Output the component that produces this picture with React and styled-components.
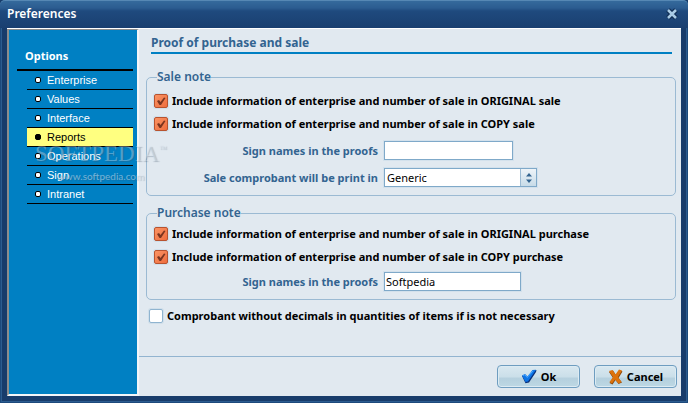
import React from "react";
import styled, { createGlobalStyle } from "styled-components";

const GlobalStyle = createGlobalStyle`
  * {
    box-sizing: border-box;
  }

  body {
    margin: 0;
    background: #183c6b;
    font-family: "Noto Sans", "Open Sans", sans-serif;
    font-size: 11px;
    line-height: 14px;
  }
`;

const Window = styled.div`
  display: flex;
  flex-direction: column;
  min-height: 100vh;
  padding: 0 7px 7px;
  background: #183c6b;
  border-radius: 5px 5px 0 0;
  box-shadow: inset 0 0 0 1px #1d4a7c, inset 0 0 0 2px #2c5c8f;
`;

const TitleBar = styled.header`
  display: flex;
  align-items: center;
  justify-content: space-between;
  height: 28px;
  margin: 0 -7px;
  padding: 0 9px 2px 7px;
  border-top: 1px solid #5688b4;
  border-radius: 5px 5px 0 0;
  background: linear-gradient(#356a9c 0, #2b5c90 7px, #1f4a7e 10px, #1a3f70 100%);
`;

const Title = styled.h1`
  margin: 0;
  color: #fff;
  font-size: 12px;
  font-weight: 600;
`;

const CloseButton = styled.button`
  display: flex;
  padding: 0;
  border: 0;
  background: none;
`;

const Body = styled.div`
  display: flex;
  flex: 1;
  border-top: 1px solid #fff;
  background: #e1e9f0;
`;

const Sidebar = styled.nav`
  width: 132px;
  padding: 19px 4px 0 8px;
  border: 2px solid;
  border-color: #8d8d8d #f2f5f8 #f2f5f8 #8d8d8d;
  border-top-width: 1px;
  background: #0080c3;
`;

const SidebarTitle = styled.h2`
  margin: 0;
  padding: 0 0 6px 8px;
  border-bottom: 2px solid #000;
  color: #fff;
  font-size: 11px;
  font-weight: 700;
`;

const OptionList = styled.ul`
  margin: 0 0 0 10px;
  padding: 0;
  list-style: none;
`;

const Option = styled.li`
  border-bottom: 1px solid #000;
  background: ${(props) => (props.$active ? "#ffff80" : "none")};
`;

const OptionLink = styled.a`
  display: flex;
  align-items: center;
  gap: 6px;
  height: 18px;
  padding-left: 8px;
  color: ${(props) => (props.$active ? "#000" : "#fff")};
  font-family: "Liberation Sans", Arial, sans-serif;
  text-decoration: none;
`;

const Bullet = styled.span`
  width: 6px;
  height: 6px;
  border: 1px solid #000;
  border-radius: 2px;
  background: ${(props) => (props.$active ? "#000" : "#fff")};
`;

const Main = styled.main`
  display: flex;
  flex: 1;
  flex-direction: column;
  min-width: 0;
`;

const Content = styled.div`
  flex: 1;
  padding: 7px 5px 0 7px;
`;

const Heading = styled.h2`
  margin: 0 4px 16px 5px;
  padding-bottom: 2px;
  border-bottom: 2px solid #0080c3;
  color: #336490;
  font-size: 12px;
  font-weight: 700;
`;

const Group = styled.fieldset`
  min-width: 0;
  margin: 0 0 ${(props) => props.$bottom}px;
  padding: ${(props) => props.$top}px 7px 4px;
  border: 1px solid #9bbad3;
  border-radius: 5px;
`;

const Legend = styled.legend`
  margin-left: 3px;
  padding: 0;
  color: #336490;
  font-size: 12px;
  font-weight: 600;
`;

const CheckRow = styled.label`
  display: flex;
  align-items: center;
  gap: 4px;
  height: 23px;
  padding-left: ${(props) => (props.$outer ? 3 : 0)}px;
  color: #000;
  font-weight: 700;
  white-space: nowrap;
`;

const CheckFrame = styled.span`
  display: grid;
  width: 14px;
  height: 14px;

  > * {
    grid-area: 1 / 1;
  }
`;

const CheckInput = styled.input`
  appearance: none;
  width: 14px;
  height: 14px;
  margin: 0;
  border: 1px solid #8fb4d0;
  border-radius: 2px;
  background: #fff;
  box-shadow: 0 0 0 1px #d0dfea;

  &:checked {
    border-color: #b8532f;
    background: linear-gradient(135deg, #fb9464, #ee6d3e);
  }
`;

const CheckMark = styled.svg`
  z-index: 1;
  pointer-events: none;
`;

const Fields = styled.div`
  padding-top: ${(props) => props.$top}px;
`;

const FieldRow = styled.div`
  display: flex;
  align-items: center;
  gap: 6px;
  height: 27px;
`;

const FieldLabel = styled.label`
  width: 224px;
  color: #336490;
  font-weight: 700;
  text-align: right;
`;

const TextInput = styled.input`
  width: ${(props) => props.$width}px;
  height: 19px;
  padding: 0 1px;
  border: 1px solid #7fa9c9;
  background: #fff;
  box-shadow: 0 0 0 1px #d3e1ec;
  color: #000;
  font-family: inherit;
  font-size: 11px;
`;

const SelectFrame = styled.div`
  display: flex;
  position: relative;
  width: 153px;
  height: 19px;
  border: 1px solid #7fa9c9;
  background: #fff;
  box-shadow: 0 0 0 1px #d3e1ec;
`;

const Select = styled.select`
  appearance: none;
  width: 100%;
  padding: 0 18px 0 2px;
  border: 0;
  background: none;
  color: #000;
  font-family: inherit;
  font-size: 11px;
`;

const Spinner = styled.span`
  display: flex;
  position: absolute;
  top: 0;
  right: 0;
  bottom: 0;
  align-items: center;
  justify-content: center;
  width: 16px;
  border-left: 1px solid #9bbad3;
  background: linear-gradient(#eef4f8, #c7dbe8);
  pointer-events: none;
`;

const Footer = styled.footer`
  display: flex;
  justify-content: flex-end;
  gap: 14px;
  padding: 8px 4px;
  border-top: 1px solid #92b4d0;
`;

const ActionButton = styled.button`
  display: flex;
  align-items: center;
  justify-content: center;
  gap: 4px;
  width: 83px;
  height: 23px;
  padding: 0;
  border: 1px solid #6e9dc0;
  border-radius: 4px;
  background: linear-gradient(#d9e8f0 0, #cbdfe9 50%, #b5d0de 60%, #bdd8e4 100%);
  box-shadow: inset 0 0 0 1px #dcebf3;
  color: #000;
  font-family: inherit;
  font-size: 11px;
  font-weight: 700;
`;

const Watermark = styled.div`
  position: absolute;
  top: 142px;
  left: 35px;
  color: rgba(225, 235, 245, 0.35);
  font-family: "Liberation Serif", serif;
  font-size: 23px;
  line-height: 24px;
  text-shadow: 1px 1px 1px rgba(60, 80, 100, 0.3);
  white-space: nowrap;
  pointer-events: none;

  sup {
    font-size: 8px;
    line-height: 8px;
    vertical-align: 10px;
  }
`;

const WatermarkUrl = styled.div`
  margin-left: 22px;
  color: rgba(225, 235, 245, 0.5);
  font-family: Lato, sans-serif;
  font-size: 10px;
  line-height: 20px;
`;

const options = ["Enterprise", "Values", "Interface", "Reports", "Operations", "Sign", "Intranet"];

function Check({ label, checked, outer }) {
  return (
    <CheckRow $outer={outer}>
      <CheckFrame>
        <CheckInput type="checkbox" defaultChecked={checked} />
        {checked && (
          <CheckMark width="14" height="14" viewBox="0 0 14 14">
            <path d="M3 7l2-1 1.500 2L10 3.500l1.500.5L7 11H5.500z" fill="#7a3520" />
          </CheckMark>
        )}
      </CheckFrame>
      {label}
    </CheckRow>
  );
}

function App() {
  return (
    <>
      <GlobalStyle />
      <Window>
        <TitleBar>
          <Title>Preferences</Title>
          <CloseButton type="button" aria-label="Close">
            <svg width="14" height="14" viewBox="0 0 14 14">
              <path d="M3 3l8 8M11 3l-8 8" stroke="#0f2d54" strokeWidth="5" />
              <path d="M3 3l8 8M11 3l-8 8" stroke="#a9cbe6" strokeWidth="2.500" />
            </svg>
          </CloseButton>
        </TitleBar>

        <Body>
          <Sidebar>
            <SidebarTitle>Options</SidebarTitle>
            <OptionList>
              {options.map((name) => {
                const active = name === "Reports";
                return (
                  <Option key={name} $active={active}>
                    <OptionLink href="#" $active={active}>
                      <Bullet $active={active} />
                      {name}
                    </OptionLink>
                  </Option>
                );
              })}
            </OptionList>
          </Sidebar>

          <Main>
            <Content>
              <Heading>Proof of purchase and sale</Heading>

              <Group $top={5} $bottom={10}>
                <Legend>Sale note</Legend>
                <Check checked label="Include information of enterprise and number of sale in ORIGINAL sale" />
                <Check checked label="Include information of enterprise and number of sale in COPY sale" />
                <Fields $top={2}>
                  <FieldRow>
                    <FieldLabel htmlFor="saleSign">Sign names in the proofs</FieldLabel>
                    <TextInput id="saleSign" type="text" $width={129} />
                  </FieldRow>
                  <FieldRow>
                    <FieldLabel htmlFor="salePrint">Sale comprobant will be print in</FieldLabel>
                    <SelectFrame>
                      <Select id="salePrint">
                        <option>Generic</option>
                      </Select>
                      <Spinner>
                        <svg width="8" height="10" viewBox="0 0 8 10">
                          <path d="M4 0l3 3.500H1zM4 10l3-3.500H1z" fill="#336490" />
                        </svg>
                      </Spinner>
                    </SelectFrame>
                  </FieldRow>
                </Fields>
              </Group>

              <Group $top={2} $bottom={4}>
                <Legend>Purchase note</Legend>
                <Check checked label="Include information of enterprise and number of sale in ORIGINAL purchase" />
                <Check checked label="Include information of enterprise and number of sale in COPY purchase" />
                <Fields $top={0}>
                  <FieldRow>
                    <FieldLabel htmlFor="purchaseSign">Sign names in the proofs</FieldLabel>
                    <TextInput id="purchaseSign" type="text" defaultValue="Softpedia" $width={137} />
                  </FieldRow>
                </Fields>
              </Group>

              <Check outer label="Comprobant without decimals in quantities of items if is not necessary" />
            </Content>

            <Footer>
              <ActionButton type="button">
                <svg width="16" height="16" viewBox="0 0 16 16">
                  <path d="M1 7l3-1.500 2.500 2.500L12 1.500l3.500-.5-.5 2L8 13.500l-3.500.8z" fill="#0a2f78" />
                  <path d="M1 6.500l3-1.500 2.500 2.500L11.500 1l3.500-.2L7 12.500l-2.500.5z" fill="#0c74e6" />
                  <path d="M2 6.500l1.800-.7L6.300 8.500 12 1.800" fill="none" stroke="#4aa8ff" />
                </svg>
                Ok
              </ActionButton>
              <ActionButton type="button">
                <svg width="15" height="16" viewBox="0 0 15 16">
                  <path d="M1 3l4-1.500L8 6l3.500-5 3 1.500L10.500 9l3.500 4.500-3.500 1.500L7.500 11l-3 4.500L1.500 14 5 9z" fill="#8a4608" />
                  <path d="M1 2l3.500-1L7.500 5.500 11 .5l3 1L10 8l3.500 5-3 1.500L7 10.500l-3 4L1.500 13 5 8z" fill="#dc720c" />
                </svg>
                Cancel
              </ActionButton>
            </Footer>
          </Main>
        </Body>

        <Watermark>
          SOFTPEDIA<sup>™</sup>
          <WatermarkUrl>www.softpedia.com</WatermarkUrl>
        </Watermark>
      </Window>
    </>
  );
}

export default App;
